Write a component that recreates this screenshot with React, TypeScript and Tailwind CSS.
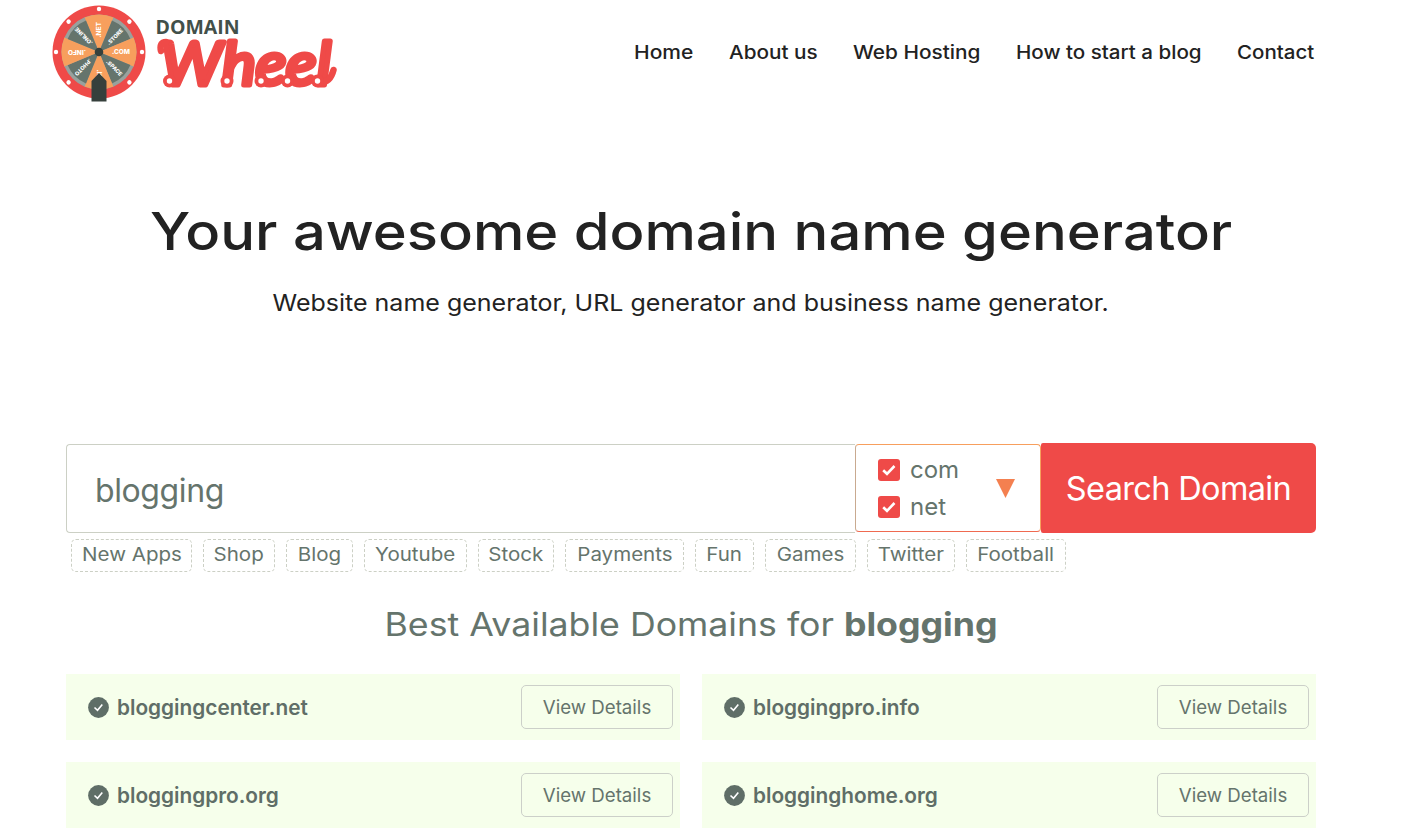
import React from "react";

const NAV = [
  { label: "Home", width: "w-[59px]", stretch: "scale-x-[1.135]" },
  { label: "About us", width: "w-[88px]", stretch: "scale-x-[1.12]" },
  { label: "Web Hosting", width: "w-[127px]", stretch: "scale-x-[1.125]" },
  { label: "How to start a blog", width: "w-[185px]", stretch: "scale-x-[1.112]" },
  { label: "Contact", width: "w-[77px]", stretch: "scale-x-[1.108]" },
];

const TAGS = [
  { label: "New Apps", width: "w-[121px]" },
  { label: "Shop", width: "w-[72px]" },
  { label: "Blog", width: "w-[67px]" },
  { label: "Youtube", width: "w-[103px]" },
  { label: "Stock", width: "w-[76px]" },
  { label: "Payments", width: "w-[119px]" },
  { label: "Fun", width: "w-[59px]" },
  { label: "Games", width: "w-[91px]" },
  { label: "Twitter", width: "w-[88px]" },
  { label: "Football", width: "w-[100px]" },
];

const DOMAINS = ["bloggingcenter.net", "bloggingpro.info", "bloggingpro.org", "blogginghome.org"];

const SEGMENTS = [
  { label: ".NET", fill: "#f79f5d", angle: -90 },
  { label: ".STORE", fill: "#65746c", angle: -45 },
  { label: ".COM", fill: "#f79f5d", angle: 0 },
  { label: ".SPACE", fill: "#65746c", angle: 45 },
  { label: ".IO", fill: "#f79f5d", angle: 90 },
  { label: ".PHOTO", fill: "#65746c", angle: 135 },
  { label: ".INFO", fill: "#f79f5d", angle: 180 },
  { label: ".ONLINE", fill: "#65746c", angle: 225 },
];

const BULBS = [117.5, 175, 209, 235.5, 265.5];

function Logo() {
  return (
    <svg className="block" width="290" height="104" viewBox="0 0 290 104" aria-label="Domain Wheel">
      <circle cx="47" cy="52" r="46.5" fill="#ef4a48" />
      <circle cx="47" cy="52" r="37.5" fill="#98a19d" />
      {SEGMENTS.map((s) => (
        <g key={s.label} transform={`translate(47 52) rotate(${s.angle})`}>
          <path
            d={s.fill === "#f79f5d" ? "M0 0L34.6 -14.4A37.5 37.5 0 0 1 34.6 14.4Z" : "M0 0L31.4 -13A34 34 0 0 1 31.4 13Z"}
            fill={s.fill}
          />
          <text
            x="22"
            y="2.4"
            fontFamily="Inter, sans-serif"
            fontSize={s.fill === "#f79f5d" ? 6.5 : 5.5}
            fontWeight="800"
            fill="#fff"
            textAnchor="middle"
          >
            {s.label}
          </text>
          <circle cx="43" cy="0" r="2.2" fill="#fff" />
        </g>
      ))}
      <circle cx="47" cy="52" r="4.3" fill="#36403c" />
      <path d="M39.500 101.500V81L47 73L54.500 81V101.500Z" fill="#36403c" />
      <text
        x="103.500"
        y="34"
        fontFamily="Open Sans, sans-serif"
        fontSize="19.500"
        fontWeight="700"
        fill="#42504a"
        textLength="84"
        lengthAdjust="spacingAndGlyphs"
      >
        DOMAIN
      </text>
      <text
        x="109"
        y="84.500"
        fontFamily="Lato, sans-serif"
        fontSize="60"
        fontStyle="italic"
        fontWeight="400"
        fill="#ef4a48"
        stroke="#ef4a48"
        strokeWidth="5"
        strokeLinejoin="round"
        textLength="170"
        lengthAdjust="spacingAndGlyphs"
      >
        Wheel
      </text>
      <path
        d="M109 51Q107 42 114 42M265.500 82Q278 84 281.500 70"
        fill="none"
        stroke="#ef4a48"
        strokeWidth="6.500"
        strokeLinecap="round"
      />
      {BULBS.map((x) => (
        <g key={x}>
          <circle cx={x} cy="81" r="6.500" fill="#ef4a48" />
          <circle cx={x} cy="81" r="2.700" fill="#fff" />
        </g>
      ))}
    </svg>
  );
}

function Checkbox({ label }: { label: string }) {
  return (
    <label className="flex h-[37px] items-center">
      <span className="flex h-[22px] w-[22px] items-center justify-center rounded-[3px] bg-[#ef4a48]">
        <svg width="16" height="14" viewBox="0 0 16 14" fill="none" stroke="#fff" strokeWidth="2.600">
          <path d="M2.200 7.200L6 10.800L13.500 3" />
        </svg>
      </span>
      <span className="ml-[10px] text-[24px] leading-[30px] text-[#65746c]">{label}</span>
    </label>
  );
}

function DomainCard({ name }: { name: string }) {
  return (
    <div className="flex h-[66px] items-center justify-between bg-[#f6ffeb] pr-[7px] pl-[22px]">
      <div className="flex items-center gap-[8px]">
        <svg width="21" height="21" viewBox="0 0 21 21">
          <circle cx="10.500" cy="10.500" r="10.400" fill="#5f6e67" />
          <path d="M6.500 10.500L9.500 13.300L14.300 7.500" fill="none" stroke="#fff" strokeWidth="1.600" />
        </svg>
        <span className="pt-px text-[20.800px] font-semibold whitespace-nowrap text-[#5f6e67]">{name}</span>
      </div>
      <button className="h-[44px] w-[152px] rounded-[5px] border border-[#ccd0c9] pt-[3px] text-[18.700px] whitespace-nowrap text-[#65746c]">
        View Details
      </button>
    </div>
  );
}

export default function App() {
  return (
    <div className="flex h-[837px] w-[1415px] flex-col overflow-hidden bg-white font-['Inter',sans-serif]">
      <header className="flex h-[104px] shrink-0 justify-between pr-[101px] pl-[52px]">
        <Logo />
        <nav className="flex h-[104px] items-center gap-[36px] pt-[2px] text-[18.500px] font-[450] text-[#222]">
          {NAV.map((n) => (
            <a key={n.label} className={`${n.width} ${n.stretch} origin-left whitespace-nowrap`}>
              {n.label}
            </a>
          ))}
        </nav>
      </header>

      <section className="flex h-[339px] w-[1382px] shrink-0 flex-col items-center pt-[96px]">
        <h1 className="scale-x-[1.113] text-[52px] leading-[64px] font-medium whitespace-nowrap text-[#222]">
          Your awesome domain name generator
        </h1>
        <p className="mt-[23px] scale-x-[1.087] text-[23px] leading-[32px] whitespace-nowrap text-[#222]">
          Website name generator, URL generator and business name generator.
        </p>
      </section>

      <main className="flex w-[1316px] flex-col pl-[66px]">
        <div className="flex h-[90px]">
          <div className="mt-px flex h-[89px] w-[789px] items-center rounded-l-[4px] border border-r-0 border-[#ccd0c5] pt-[4px] pl-[28px] text-[32px] tracking-[-0.4px] text-[#65746c]">
            blogging
          </div>
          <div className="mt-px flex h-[88px] w-[186px] items-center justify-between rounded-[4px] border border-t-[#f79f5d] border-r-[#f79f5d] border-b-[#ef6a50] border-l-[#c9aa90] pr-[25px] pl-[22px]">
            <div className="flex flex-col">
              <Checkbox label="com" />
              <Checkbox label="net" />
            </div>
            <svg width="19" height="19" viewBox="0 0 19 19">
              <path d="M0 0H19L9.500 19Z" fill="#f48050" />
            </svg>
          </div>
          <button className="h-[90px] w-[275px] rounded-r-[5px] rounded-l-[2px] bg-[#ef4a48] pt-[3px] text-[32.500px] tracking-[-0.650px] whitespace-nowrap text-white">
            Search Domain
          </button>
        </div>

        <div className="mt-[6px] flex gap-[11px] pl-[5px]">
          {TAGS.map((t) => (
            <span
              key={t.label}
              className={`${t.width} flex h-[33px] shrink-0 items-center justify-center rounded-[5px] border border-dashed border-[#ccd0c5] pb-[2px] text-[18.500px] whitespace-nowrap text-[#65746c]`}
            >
              <span className="scale-x-[1.11]">{t.label}</span>
            </span>
          ))}
        </div>

        <h2 className="mt-[33px] scale-x-[1.115] text-center text-[32px] leading-[40px] whitespace-nowrap text-[#65746c]">
          Best Available Domains for <b className="font-bold">blogging</b>
        </h2>

        <div className="mt-[29px] grid grid-cols-2 gap-x-[22px] gap-y-[22px]">
          {DOMAINS.map((d) => (
            <DomainCard key={d} name={d} />
          ))}
        </div>
      </main>
    </div>
  );
}
